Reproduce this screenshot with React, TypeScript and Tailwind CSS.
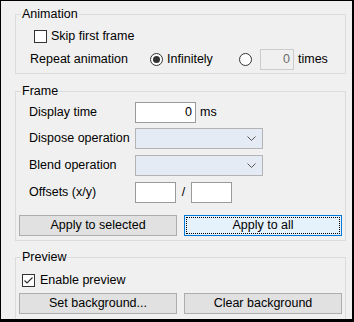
import React from "react";

const font = { fontFamily: '"Liberation Sans", Arial, sans-serif' };

function CheckBox({ checked }: { checked?: boolean }) {
  return (
    <span className="w-[13px] h-[13px] border border-[#333333] bg-white flex items-center justify-center shrink-0">
      {checked && (
        <svg width="11" height="11" viewBox="0 0 11 11">
          <polyline points="1.5,5.5 4,8 9.5,2.5" fill="none" stroke="#333333" strokeWidth="1.2" />
        </svg>
      )}
    </span>
  );
}

function Radio({ checked }: { checked?: boolean }) {
  return (
    <span className="w-[13px] h-[13px] rounded-full border border-[#333333] bg-white flex items-center justify-center shrink-0">
      {checked && <span className="w-[7px] h-[7px] rounded-full bg-[#333333]" />}
    </span>
  );
}

function TextBox({ w, value, disabled }: { w: string; value?: string; disabled?: boolean }) {
  return (
    <div
      className={`${w} h-[21px] border flex items-center justify-end pr-[3px] ${
        disabled ? "border-[#cccccc] bg-[#f0f0f0] text-[#6d6d6d]" : "border-[#9a9a9a] bg-white text-black"
      }`}
    >
      {value}
    </div>
  );
}

function Combo() {
  return (
    <div className="w-[128px] h-[21px] border border-[#b4b4b4] bg-[#e4ebf4] flex items-center justify-end pr-[6px]">
      <svg width="9" height="5" viewBox="0 0 9 5">
        <polyline points="0.5,0.5 4.5,4.5 8.5,0.5" fill="none" stroke="#555555" strokeWidth="1" />
      </svg>
    </div>
  );
}

function Button({ label, focused }: { label: string; focused?: boolean }) {
  return (
    <div
      className={`relative h-[21px] border flex items-center justify-center ${
        focused ? "border-[#0078d7] bg-[#e5f1fb]" : "border-[#adadad] bg-[#e1e1e1]"
      }`}
    >
      {focused && <span className="absolute inset-[1px] border border-dotted border-black" />}
      <span className="relative">{label}</span>
    </div>
  );
}

function Legend({ children }: { children: React.ReactNode }) {
  return <legend className="ml-[5px] px-[1px] leading-[15px]">{children}</legend>;
}

export default function App() {
  return (
    <div
      style={font}
      className="w-[354px] h-[322px] box-border bg-[#f0f0f0] border-l border-t border-r-2 border-b-[3px] border-black overflow-hidden pl-[14px] pr-[6px] pt-[6px] text-[12.5px] text-black"
    >
      <fieldset className="border border-[#dcdcdc] pb-[3px]">
        <Legend>Animation</Legend>
        <div className="mt-[4px] h-[20px] flex items-center pl-[18px] gap-[4px]">
          <CheckBox />
          <span>Skip first frame</span>
        </div>
        <div className="mt-[3px] h-[21px] flex items-center pl-[14px]">
          <span className="w-[120px]">Repeat animation</span>
          <div className="w-[89px] flex items-center gap-[4px]">
            <Radio checked />
            <span>Infinitely</span>
          </div>
          <Radio />
          <div className="ml-[8px]">
            <TextBox w="w-[34px]" value="0" disabled />
          </div>
          <span className="ml-[4px]">times</span>
        </div>
      </fieldset>

      <fieldset className="mt-[10px] border border-[#dcdcdc] pb-[4px]">
        <Legend>Frame</Legend>
        <div className="mt-[3px] h-[21px] flex items-center pl-[13px]">
          <span className="w-[106px]">Display time</span>
          <TextBox w="w-[61px]" value="0" />
          <span className="ml-[4px]">ms</span>
        </div>
        <div className="mt-[5px] h-[21px] flex items-center pl-[13px]">
          <span className="w-[106px]">Dispose operation</span>
          <Combo />
        </div>
        <div className="mt-[6px] h-[21px] flex items-center pl-[13px]">
          <span className="w-[106px]">Blend operation</span>
          <Combo />
        </div>
        <div className="mt-[6px] h-[21px] flex items-center pl-[13px]">
          <span className="w-[106px]">Offsets (x/y)</span>
          <TextBox w="w-[41px]" />
          <span className="w-[15px] text-center">/</span>
          <TextBox w="w-[41px]" />
        </div>
        <div className="mt-[12px] grid grid-cols-2 gap-[7px] px-[3px]">
          <Button label="Apply to selected" />
          <Button label="Apply to all" focused />
        </div>
      </fieldset>

      <fieldset className="mt-[9px] border border-[#dcdcdc] pb-[10px]">
        <Legend>Preview</Legend>
        <div className="mt-[6px] h-[18px] flex items-center pl-[6px] gap-[5px]">
          <CheckBox checked />
          <span>Enable preview</span>
        </div>
        <div className="mt-[4px] grid grid-cols-2 gap-[7px] px-[3px]">
          <Button label="Set background..." />
          <Button label="Clear background" />
        </div>
      </fieldset>
    </div>
  );
}
